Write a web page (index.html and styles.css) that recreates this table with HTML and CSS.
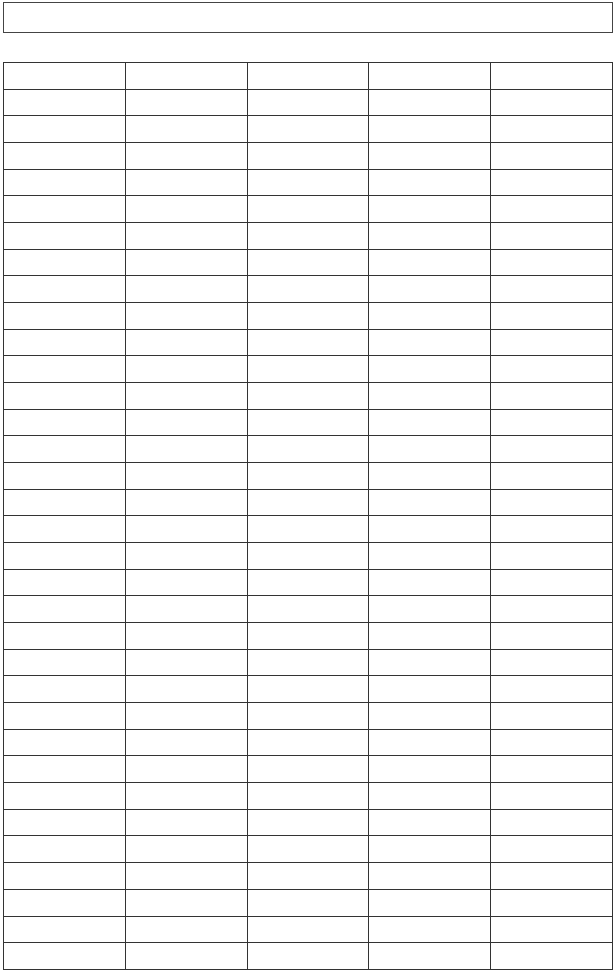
FILE: index.html
```html
<!DOCTYPE html>
<html>
<head>
<meta charset="utf-8">
<link rel="stylesheet" href="styles.css">
</head>
<body>
<div class="topbox"></div>
<table class="grid">
<tbody>
<tr><td></td><td></td><td></td><td></td><td></td></tr>
<tr><td></td><td></td><td></td><td></td><td></td></tr>
<tr><td></td><td></td><td></td><td></td><td></td></tr>
<tr><td></td><td></td><td></td><td></td><td></td></tr>
<tr><td></td><td></td><td></td><td></td><td></td></tr>
<tr><td></td><td></td><td></td><td></td><td></td></tr>
<tr><td></td><td></td><td></td><td></td><td></td></tr>
<tr><td></td><td></td><td></td><td></td><td></td></tr>
<tr><td></td><td></td><td></td><td></td><td></td></tr>
<tr><td></td><td></td><td></td><td></td><td></td></tr>
<tr><td></td><td></td><td></td><td></td><td></td></tr>
<tr><td></td><td></td><td></td><td></td><td></td></tr>
<tr><td></td><td></td><td></td><td></td><td></td></tr>
<tr><td></td><td></td><td></td><td></td><td></td></tr>
<tr><td></td><td></td><td></td><td></td><td></td></tr>
<tr><td></td><td></td><td></td><td></td><td></td></tr>
<tr><td></td><td></td><td></td><td></td><td></td></tr>
<tr><td></td><td></td><td></td><td></td><td></td></tr>
<tr><td></td><td></td><td></td><td></td><td></td></tr>
<tr><td></td><td></td><td></td><td></td><td></td></tr>
<tr><td></td><td></td><td></td><td></td><td></td></tr>
<tr><td></td><td></td><td></td><td></td><td></td></tr>
<tr><td></td><td></td><td></td><td></td><td></td></tr>
<tr><td></td><td></td><td></td><td></td><td></td></tr>
<tr><td></td><td></td><td></td><td></td><td></td></tr>
<tr><td></td><td></td><td></td><td></td><td></td></tr>
<tr><td></td><td></td><td></td><td></td><td></td></tr>
<tr><td></td><td></td><td></td><td></td><td></td></tr>
<tr><td></td><td></td><td></td><td></td><td></td></tr>
<tr><td></td><td></td><td></td><td></td><td></td></tr>
<tr><td></td><td></td><td></td><td></td><td></td></tr>
<tr><td></td><td></td><td></td><td></td><td></td></tr>
<tr><td></td><td></td><td></td><td></td><td></td></tr>
<tr><td></td><td></td><td></td><td></td><td></td></tr>
</tbody>
</table>
</body>
</html>
```
FILE: styles.css
```css
html, body {
  margin: 0;
  padding: 0;
  background: #ffffff;
}
body {
  padding: 2px 3px 0 3px;
  font-family: "Liberation Serif", serif;
}
.topbox {
  box-sizing: border-box;
  width: 610px;
  height: 31px;
  border: 1px solid #444444;
}
.grid {
  margin-top: 29px;
  width: 610px;
  border-collapse: collapse;
  border: 1px solid #333333;
  table-layout: fixed;
}
.grid td {
  border: 1px solid #333333;
  padding: 0;
  height: 25.676px;
}
```
